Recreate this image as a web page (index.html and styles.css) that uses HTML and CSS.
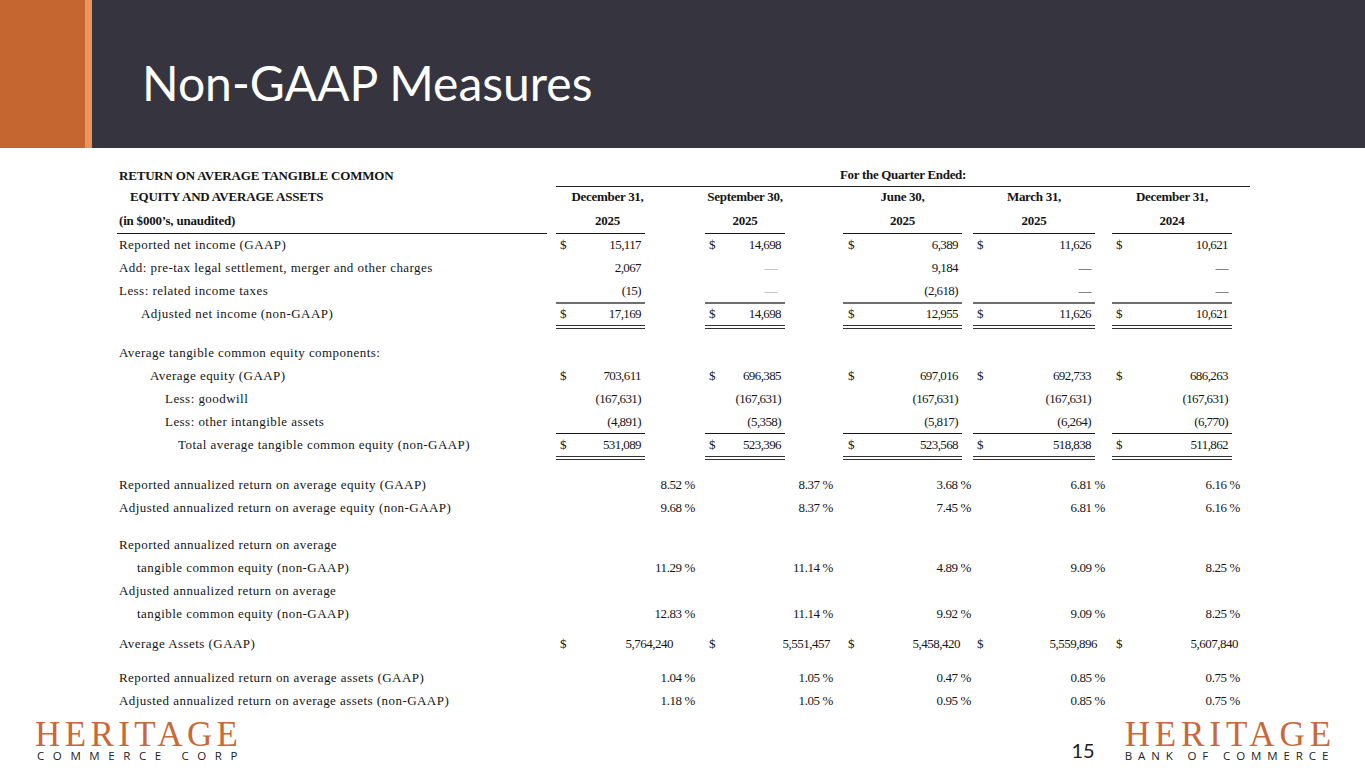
FILE: index.html
```html
<!DOCTYPE html>
<html lang="en">
<head>
<meta charset="utf-8">
<title>Non-GAAP Measures</title>
<link rel="stylesheet" href="styles.css">
</head>
<body>
<div class="slide">
  <header class="banner">
    <div class="accent"></div>
    <div class="stripe"></div>
    <div class="bar"><h1>Non-GAAP Measures</h1></div>
  </header>

  <main class="fin">
    <div class="row r-h1">
      <div class="lbl b">RETURN ON AVERAGE TANGIBLE COMMON</div>
      <div class="quarter b">For the Quarter Ended:</div>
    </div>
    <div class="row r-h2">
      <div class="lbl b ind1">EQUITY AND AVERAGE ASSETS</div>
      <div class="hd c1 b">December 31,</div>
      <div class="hd c2 b">September 30,</div>
      <div class="hd c3 b">June 30,</div>
      <div class="hd c4 b">March 31,</div>
      <div class="hd c5 b">December 31,</div>
    </div>
    <div class="row r-h3">
      <div class="lbl b line">(in $000’s, unaudited)</div>
      <div class="hd c1 b line">2025</div>
      <div class="hd c2 b line">2025</div>
      <div class="hd c3 b line">2025</div>
      <div class="hd c4 b line">2025</div>
      <div class="hd c5 b line">2024</div>
    </div>

    <div class="row">
      <div class="lbl">Reported net income (GAAP)</div>
      <div class="val c1"><span>$</span><span>15,117</span></div>
      <div class="val c2"><span>$</span><span>14,698</span></div>
      <div class="val c3"><span>$</span><span>6,389</span></div>
      <div class="val c4"><span>$</span><span>11,626</span></div>
      <div class="val c5"><span>$</span><span>10,621</span></div>
    </div>
    <div class="row">
      <div class="lbl">Add: pre-tax legal settlement, merger and other charges</div>
      <div class="val c1"><span></span><span>2,067</span></div>
      <div class="val c2 dim"><span></span><span>—</span></div>
      <div class="val c3"><span></span><span>9,184</span></div>
      <div class="val c4"><span></span><span>—</span></div>
      <div class="val c5"><span></span><span>—</span></div>
    </div>
    <div class="row">
      <div class="lbl">Less: related income taxes</div>
      <div class="val c1 grayline"><span></span><span>(15)</span></div>
      <div class="val c2 grayline dim"><span></span><span>—</span></div>
      <div class="val c3 grayline"><span></span><span>(2,618)</span></div>
      <div class="val c4 grayline"><span></span><span>—</span></div>
      <div class="val c5 grayline"><span></span><span>—</span></div>
    </div>
    <div class="row r-total">
      <div class="lbl ind2">Adjusted net income (non-GAAP)</div>
      <div class="val c1 dbl"><span>$</span><span>17,169</span></div>
      <div class="val c2 dbl"><span>$</span><span>14,698</span></div>
      <div class="val c3 dbl"><span>$</span><span>12,955</span></div>
      <div class="val c4 dbl"><span>$</span><span>11,626</span></div>
      <div class="val c5 dbl"><span>$</span><span>10,621</span></div>
    </div>

    <div class="row gap-a">
      <div class="lbl">Average tangible common equity components:</div>
    </div>
    <div class="row">
      <div class="lbl ind3">Average equity (GAAP)</div>
      <div class="val c1"><span>$</span><span>703,611</span></div>
      <div class="val c2"><span>$</span><span>696,385</span></div>
      <div class="val c3"><span>$</span><span>697,016</span></div>
      <div class="val c4"><span>$</span><span>692,733</span></div>
      <div class="val c5"><span>$</span><span>686,263</span></div>
    </div>
    <div class="row">
      <div class="lbl ind4">Less: goodwill</div>
      <div class="val c1"><span></span><span>(167,631)</span></div>
      <div class="val c2"><span></span><span>(167,631)</span></div>
      <div class="val c3"><span></span><span>(167,631)</span></div>
      <div class="val c4"><span></span><span>(167,631)</span></div>
      <div class="val c5"><span></span><span>(167,631)</span></div>
    </div>
    <div class="row">
      <div class="lbl ind4">Less: other intangible assets</div>
      <div class="val c1 line"><span></span><span>(4,891)</span></div>
      <div class="val c2 line"><span></span><span>(5,358)</span></div>
      <div class="val c3 line"><span></span><span>(5,817)</span></div>
      <div class="val c4 line"><span></span><span>(6,264)</span></div>
      <div class="val c5 line"><span></span><span>(6,770)</span></div>
    </div>
    <div class="row r-total">
      <div class="lbl ind5">Total average tangible common equity (non-GAAP)</div>
      <div class="val c1 dbl"><span>$</span><span>531,089</span></div>
      <div class="val c2 dbl"><span>$</span><span>523,396</span></div>
      <div class="val c3 dbl"><span>$</span><span>523,568</span></div>
      <div class="val c4 dbl"><span>$</span><span>518,838</span></div>
      <div class="val c5 dbl"><span>$</span><span>511,862</span></div>
    </div>

    <div class="row gap-b">
      <div class="lbl">Reported annualized return on average equity (GAAP)</div>
      <div class="pct p1">8.52 %</div>
      <div class="pct p2">8.37 %</div>
      <div class="pct p3">3.68 %</div>
      <div class="pct p4">6.81 %</div>
      <div class="pct p5">6.16 %</div>
    </div>
    <div class="row">
      <div class="lbl">Adjusted annualized return on average equity (non-GAAP)</div>
      <div class="pct p1">9.68 %</div>
      <div class="pct p2">8.37 %</div>
      <div class="pct p3">7.45 %</div>
      <div class="pct p4">6.81 %</div>
      <div class="pct p5">6.16 %</div>
    </div>

    <div class="row gap-c">
      <div class="lbl">Reported annualized return on average</div>
    </div>
    <div class="row">
      <div class="lbl ind6">tangible common equity (non-GAAP)</div>
      <div class="pct p1">11.29 %</div>
      <div class="pct p2">11.14 %</div>
      <div class="pct p3">4.89 %</div>
      <div class="pct p4">9.09 %</div>
      <div class="pct p5">8.25 %</div>
    </div>
    <div class="row">
      <div class="lbl">Adjusted annualized return on average</div>
    </div>
    <div class="row">
      <div class="lbl ind6">tangible common equity (non-GAAP)</div>
      <div class="pct p1">12.83 %</div>
      <div class="pct p2">11.14 %</div>
      <div class="pct p3">9.92 %</div>
      <div class="pct p4">9.09 %</div>
      <div class="pct p5">8.25 %</div>
    </div>

    <div class="row gap-d">
      <div class="lbl">Average Assets (GAAP)</div>
      <div class="asset p1 a1"><span>$</span><span>5,764,240</span></div>
      <div class="asset p2 a2"><span>$</span><span>5,551,457</span></div>
      <div class="asset p3 a3"><span>$</span><span>5,458,420</span></div>
      <div class="asset p4 a4"><span>$</span><span>5,559,896</span></div>
      <div class="asset p5 a5"><span>$</span><span>5,607,840</span></div>
    </div>

    <div class="row gap-e">
      <div class="lbl">Reported annualized return on average assets (GAAP)</div>
      <div class="pct p1">1.04 %</div>
      <div class="pct p2">1.05 %</div>
      <div class="pct p3">0.47 %</div>
      <div class="pct p4">0.85 %</div>
      <div class="pct p5">0.75 %</div>
    </div>
    <div class="row">
      <div class="lbl">Adjusted annualized return on average assets (non-GAAP)</div>
      <div class="pct p1">1.18 %</div>
      <div class="pct p2">1.05 %</div>
      <div class="pct p3">0.95 %</div>
      <div class="pct p4">0.85 %</div>
      <div class="pct p5">0.75 %</div>
    </div>
  </main>

  <footer class="foot">
    <div class="logo logo-left">
      <div class="brand">HERITAGE</div>
      <div class="sub sub-corp">COMMERCE CORP</div>
    </div>
    <div class="foot-right">
      <div class="pageno">15</div>
      <div class="logo logo-right">
        <div class="brand brand-r">HERITAGE</div>
        <div class="sub sub-bank">BANK OF COMMERCE</div>
      </div>
    </div>
  </footer>
</div>
</body>
</html>
```

FILE: styles.css
```css
html, body {
  margin: 0;
  padding: 0;
  background: #ffffff;
}

.slide {
  width: 1365px;
  height: 768px;
  overflow: hidden;
  display: flex;
  flex-direction: column;
  background: #ffffff;
}

/* ---------- banner ---------- */
.banner {
  height: 148px;
  display: flex;
  flex: none;
}
.accent {
  width: 85px;
  background: #c5652f;
}
.stripe {
  width: 7px;
  background: #e9955b;
}
.bar {
  flex: 1;
  background: #36343e;
}
.bar h1 {
  margin: 0;
  padding: 59px 0 0 50px;
  font-family: Lato, "Open Sans", sans-serif;
  font-weight: 400;
  font-size: 48px;
  line-height: 1;
  color: #ffffff;
}

/* ---------- table ---------- */
.fin {
  margin: 17px 0 0 117px;
  width: 1133px;
  font-family: "Liberation Serif", "Times New Roman", serif;
  font-size: 13px;
  color: #151515;
}

.row {
  display: grid;
  grid-template-columns: 439px 89px 60px 80px 58px 119px 11px 122px 17px 120px 18px;
  height: 23px;
}
.row > div {
  box-sizing: border-box;
  line-height: 22px;
  white-space: nowrap;
}

.r-h1 { height: 21px; }
.r-h2 { height: 24px; }
.r-h3 { height: 24px; }
.r-total { height: 25px; }
.gap-a { margin-top: 14px; }
.gap-b { margin-top: 15px; }
.gap-c { margin-top: 14px; }
.gap-d { margin-top: 7px; }
.gap-e { margin-top: 11px; }

.b {
  font-weight: 700;
  font-size: 13px;
  letter-spacing: -0.3px;
}

.lbl {
  grid-column: 1;
  padding-left: 2px;
  letter-spacing: 0.45px;
  margin-right: 9px;
}
.lbl.b { letter-spacing: -0.2px; }
.ind1 { padding-left: 13px; }
.ind2 { padding-left: 24px; }
.ind3 { padding-left: 33px; }
.ind4 { padding-left: 48px; }
.ind5 { padding-left: 61px; }
.ind6 { padding-left: 20px; }

.quarter {
  grid-column: 2 / 12;
  text-align: center;
  border-bottom: 1.5px solid #222;
  line-height: 20px !important;
}

.c1 { grid-column: 2; }
.c2 { grid-column: 4; }
.c3 { grid-column: 6; }
.c4 { grid-column: 8; }
.c5 { grid-column: 10; }

.hd { text-align: center; }
.hd.c1 { padding-left: 14px; }

.line { border-bottom: 1.5px solid #1a1a1a; }
.grayline { border-bottom: 2px solid #6e6e6e; }
.dbl { border-bottom: 4px double #333; }

.val {
  display: flex;
  justify-content: space-between;
  padding: 0 4px;
  letter-spacing: -0.6px;
}
.val.c3 { padding-left: 5px; }
.dim { color: #9a9a9a; padding-right: 8px; }

.p1 { grid-column: 2 / span 2; }
.p2 { grid-column: 4 / span 2; }
.p3 { grid-column: 6 / span 2; }
.p4 { grid-column: 8 / span 2; }
.p5 { grid-column: 10 / span 2; }

.pct {
  text-align: right;
  letter-spacing: -0.4px;
  padding-right: 10px;
}
.pct.p3 { padding-right: 2px; }
.pct.p4 { padding-right: 7px; }

.asset {
  display: flex;
  justify-content: space-between;
  padding-left: 4px;
  letter-spacing: -0.5px;
}
.a1 { padding-right: 32px; }
.a2 { padding-right: 13px; }
.a3 { padding-right: 13px; padding-left: 5px; }
.a4 { padding-right: 15px; }
.a5 { padding-right: 12px; }

/* ---------- footer ---------- */
.foot {
  margin-top: auto;
  height: 47px;
  display: flex;
  justify-content: space-between;
  align-items: flex-start;
  padding: 0 29px 0 35px;
}
.logo {
  display: flex;
  flex-direction: column;
}
.brand {
  font-family: "Liberation Serif", "Times New Roman", serif;
  font-size: 35px;
  line-height: 27px;
  letter-spacing: 4.4px;
  color: #c8693a;
  height: 27px;
  white-space: nowrap;
}
.brand-r { letter-spacing: 4.9px; }
.sub {
  font-family: "Open Sans", "DejaVu Sans", sans-serif;
  font-size: 11.5px;
  line-height: 14px;
  color: #222;
  margin-top: 1px;
  white-space: nowrap;
}
.sub-corp { letter-spacing: 8.6px; padding-left: 2px; }
.sub-bank { letter-spacing: 5.9px; }

.foot-right {
  display: flex;
  align-items: flex-start;
}
.pageno {
  font-family: Lato, "Open Sans", sans-serif;
  font-size: 20px;
  color: #222;
  margin: 19px 30px 0 0;
  line-height: 20px;
}
```
